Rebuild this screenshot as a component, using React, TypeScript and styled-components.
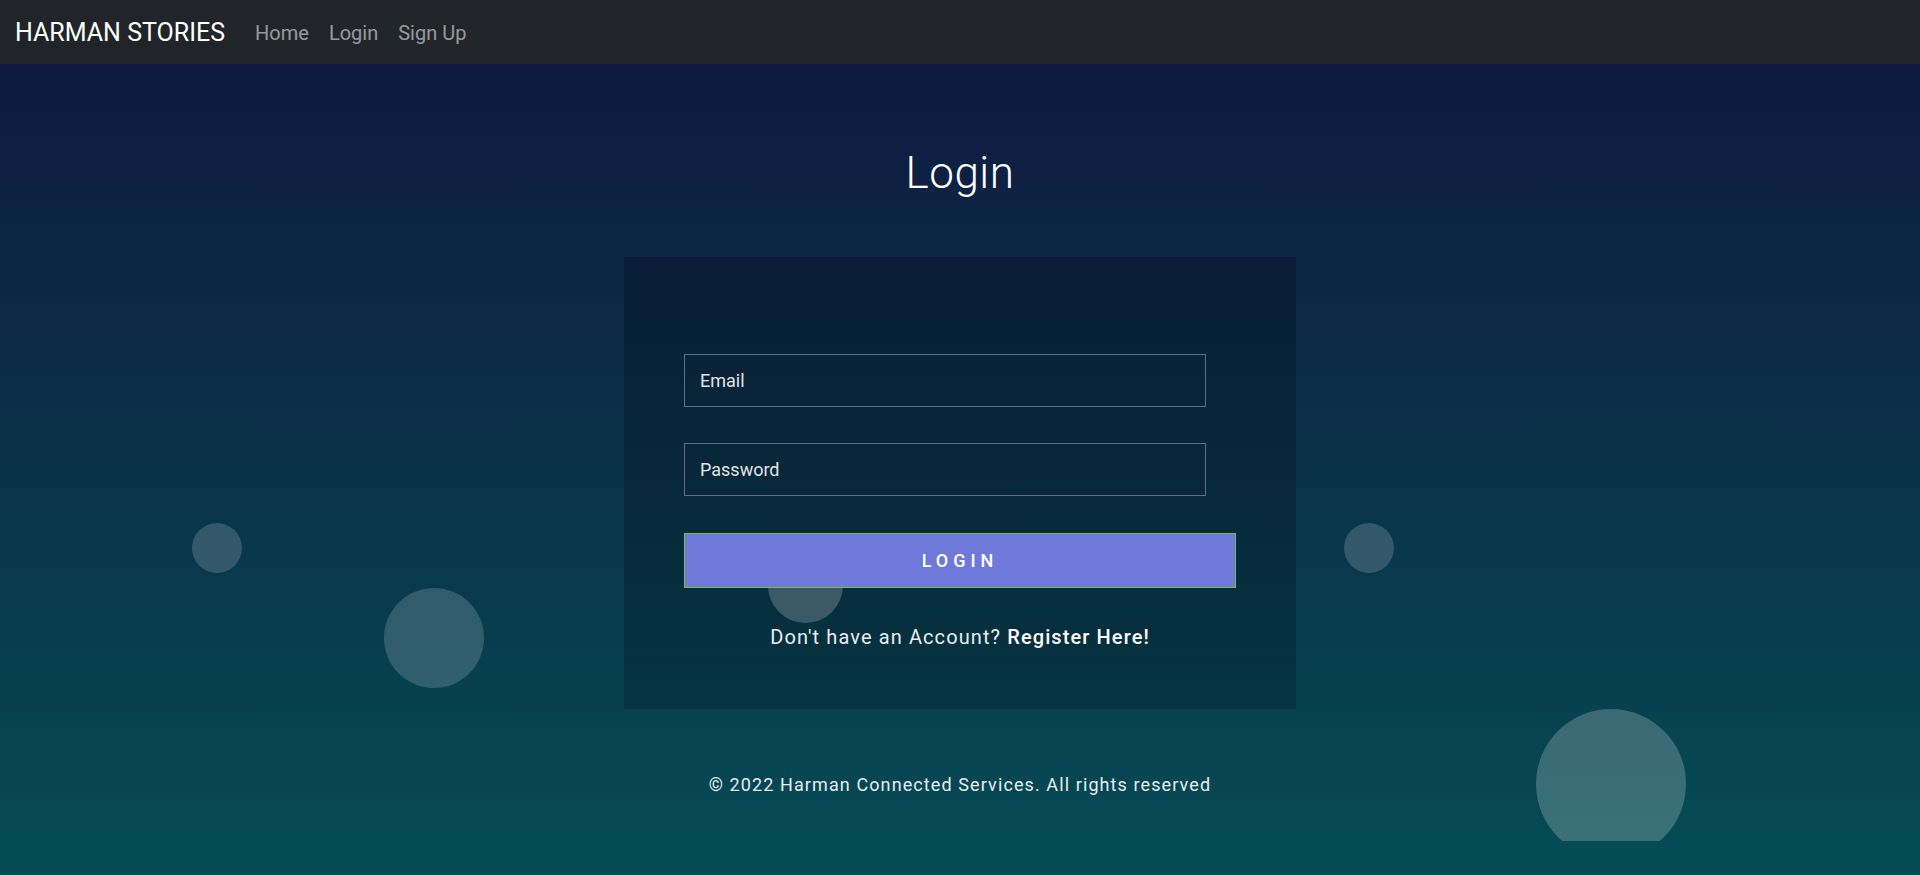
import React from "react";
import styled, { createGlobalStyle } from "styled-components";

const GlobalStyle = createGlobalStyle`
  html, body { margin: 0; padding: 0; }
  body {
    font-family: Roboto, "Liberation Sans", Arial, sans-serif;
    background: #054c55;
  }
  * { box-sizing: border-box; }
`;

const Page = styled.div`
  min-height: 100vh;
  display: flex;
  flex-direction: column;
`;

const NavBar = styled.nav`
  height: 64px;
  flex: none;
  background: #212529;
  display: flex;
  align-items: center;
  padding: 0 15px;
`;

const Brand = styled.a`
  color: #ffffff;
  font-size: 25px;
  font-weight: 400;
  margin-right: 20px;
  text-decoration: none;
  line-height: 1;
`;

const NavList = styled.div`
  display: flex;
  align-items: center;
`;

const NavLink = styled.a`
  color: rgba(255, 255, 255, 0.55);
  font-size: 20px;
  padding: 0 10px;
  text-decoration: none;
  line-height: 1;
  margin-top: 2px;
`;

const Main = styled.main`
  position: relative;
  flex: 1;
  background: linear-gradient(180deg, #0f1a41 0%, #0a3249 50%, #054c55 100%);
`;

const Bubbles = styled.div`
  position: absolute;
  top: 0;
  left: 0;
  right: 0;
  height: 777px;
  overflow: hidden;
  pointer-events: none;
  z-index: 0;
`;

const Bubble = styled.span<{ $size: number; $x: number; $y: number; $alpha: number }>`
  position: absolute;
  left: ${(p) => p.$x}px;
  top: ${(p) => p.$y}px;
  width: ${(p) => p.$size}px;
  height: ${(p) => p.$size}px;
  border-radius: 50%;
  background: rgba(255, 255, 255, ${(p) => p.$alpha});
`;

const Content = styled.div`
  position: relative;
  z-index: 1;
  display: flex;
  flex-direction: column;
  align-items: center;
  padding-top: 83px;
`;

const Title = styled.h1`
  margin: 0;
  color: #ffffff;
  font-size: 44px;
  font-weight: 300;
  line-height: 52.8px;
  letter-spacing: 0.5px;
`;

const Card = styled.div`
  margin-top: 57px;
  width: 672px;
  background: rgba(0, 0, 0, 0.2);
  padding: 97px 60px 57px;
  display: flex;
  flex-direction: column;
`;

const Form = styled.form`
  display: flex;
  flex-direction: column;
  align-items: flex-start;
`;

const Input = styled.input`
  width: 522px;
  height: 53px;
  margin-bottom: 36px;
  background: transparent;
  border: 1px solid rgba(255, 255, 255, 0.35);
  border-radius: 0;
  padding: 0 15px;
  color: #ffffff;
  font-family: Roboto, "Liberation Sans", Arial, sans-serif;
  font-size: 18px;
  outline: none;
  &::placeholder {
    color: rgba(255, 255, 255, 0.9);
  }
`;

const LoginButton = styled.button`
  width: 552px;
  height: 55px;
  margin-top: 1px;
  background: #6f79d9;
  border: 1px solid #72c04b;
  border-radius: 0;
  color: #ffffff;
  font-family: Roboto, "Liberation Sans", Arial, sans-serif;
  font-size: 18px;
  font-weight: 500;
  letter-spacing: 5px;
  padding: 0;
  cursor: pointer;
`;

const Prompt = styled.p`
  margin: 34px 0 0;
  text-align: center;
  color: #e8eef2;
  font-size: 20px;
  line-height: 30px;
  letter-spacing: 1.1px;
`;

const RegisterLink = styled.a`
  color: #ffffff;
  font-weight: 500;
  text-decoration: none;
`;

const Footer = styled.footer`
  margin-top: 62px;
  color: #e6eef0;
  font-size: 18px;
  line-height: 27px;
  letter-spacing: 1.1px;
  text-align: center;
`;

const bubbles = [
  { size: 50, x: 192, y: 459, alpha: 0.17 },
  { size: 50, x: 1344, y: 459, alpha: 0.17 },
  { size: 100, x: 384, y: 524, alpha: 0.17 },
  { size: 75, x: 768, y: 484, alpha: 0.27 },
  { size: 150, x: 1536, y: 645, alpha: 0.21 },
];

export default function App() {
  return (
    <>
      <GlobalStyle />
      <Page>
        <NavBar>
          <Brand href="#">HARMAN STORIES</Brand>
          <NavList>
            <NavLink href="#">Home</NavLink>
            <NavLink href="#">Login</NavLink>
            <NavLink href="#">Sign Up</NavLink>
          </NavList>
        </NavBar>
        <Main>
          <Bubbles>
            {bubbles.map((b, i) => (
              <Bubble key={i} $size={b.size} $x={b.x} $y={b.y} $alpha={b.alpha} />
            ))}
          </Bubbles>
          <Content>
            <Title>Login</Title>
            <Card>
              <Form onSubmit={(e) => e.preventDefault()}>
                <Input type="email" placeholder="Email" />
                <Input type="password" placeholder="Password" />
                <LoginButton type="submit">LOGIN</LoginButton>
              </Form>
              <Prompt>
                Don't have an Account? <RegisterLink href="#">Register Here!</RegisterLink>
              </Prompt>
            </Card>
            <Footer>© 2022 Harman Connected Services. All rights reserved</Footer>
          </Content>
        </Main>
      </Page>
    </>
  );
}
